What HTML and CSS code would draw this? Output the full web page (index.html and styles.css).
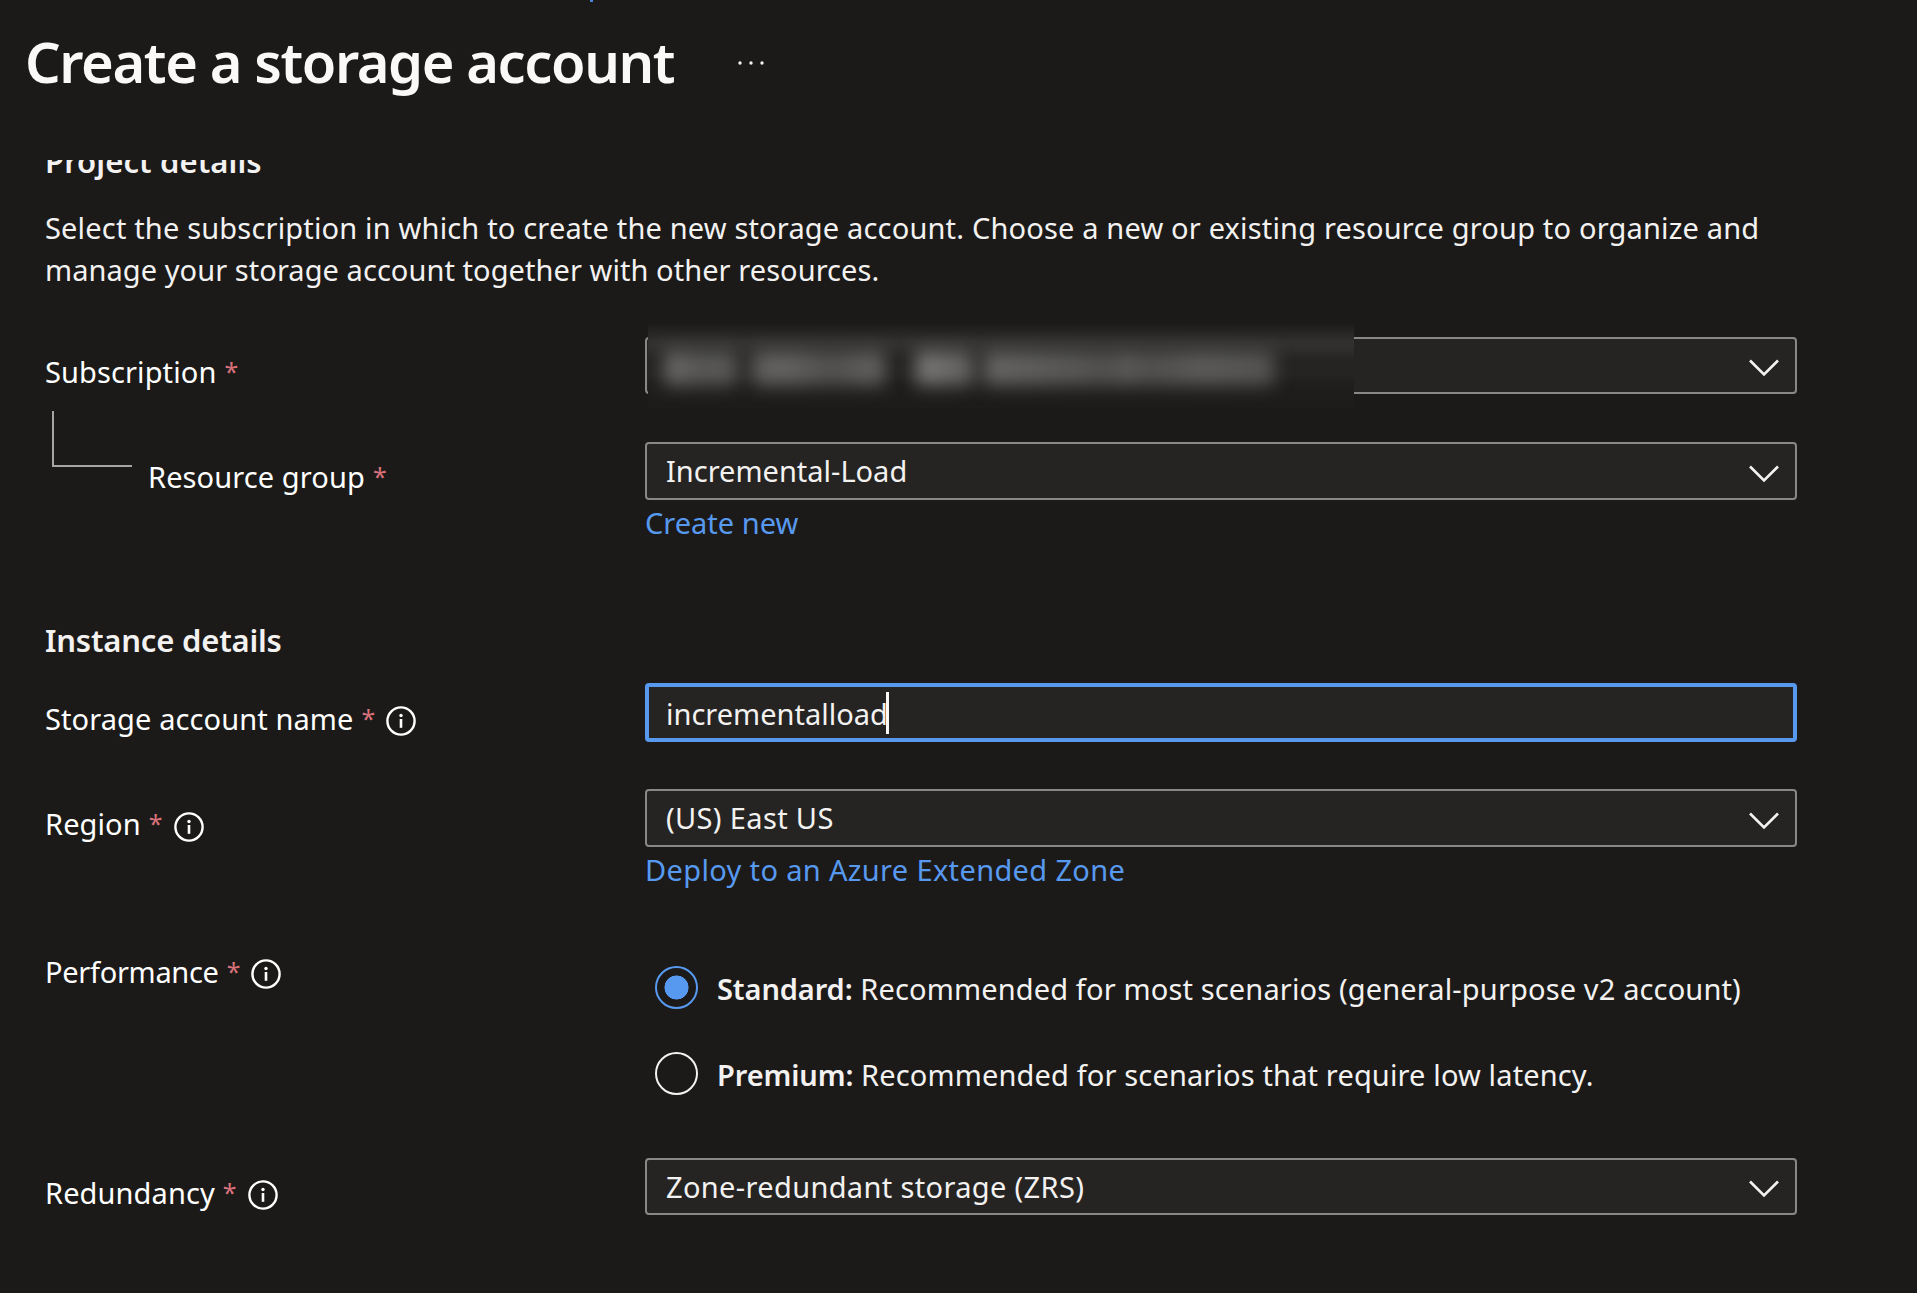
FILE: index.html
```html
<!DOCTYPE html>
<html lang="en">
<head>
<meta charset="utf-8">
<title>Create a storage account</title>
<link rel="stylesheet" href="styles.css">
</head>
<body>
<svg class="defs" aria-hidden="true">
  <symbol id="chevron" viewBox="0 0 32 20"><path d="M2 2.5 L16 16.5 L30 2.5" fill="none" stroke="currentColor" stroke-width="2.6"/></symbol>
  <symbol id="info" viewBox="0 0 30 30"><circle cx="15" cy="15" r="13.6" fill="none" stroke="currentColor" stroke-width="2.4"/><path d="M15 13V21.8" stroke="currentColor" stroke-width="2.6"/><circle cx="15" cy="9.5" r="1.7" fill="currentColor"/></symbol>
</svg>
<header class="header">
  <span class="crumb-tail"></span>
  <h1 class="title">Create a storage account</h1>
  <svg class="more" viewBox="0 0 28 6" aria-label="More"><circle cx="3" cy="3" r="1.7"/><circle cx="14" cy="3" r="1.7"/><circle cx="25" cy="3" r="1.7"/></svg>
</header>
<main class="form">
  <h2 class="section section-first">Project details</h2>
  <p class="description"><span class="line-first">Select the subscription in which to create the new storage account. Choose a new or existing resource group to organize and</span><br><span class="line-last">manage your storage account together with other resources.</span></p>

  <div class="row row-subscription">
    <label class="label"><span>Subscription</span><i class="required">*</i></label>
    <div class="control">
      <div class="select select-short"><svg class="chevron"><use href="#chevron"/></svg>
        <div class="redacted"><b class="r1"></b><b class="r2"></b><b class="r3"></b><b class="r4"></b></div>
      </div>
    </div>
  </div>
  <div class="row row-group">
    <label class="label label-child"><span>Resource group</span><i class="required">*</i></label>
    <div class="control">
      <div class="select"><span>Incremental-Load</span><svg class="chevron"><use href="#chevron"/></svg></div>
      <a class="link">Create new</a>
    </div>
  </div>

  <h2 class="section section-instance">Instance details</h2>
  <div class="row row-name">
    <label class="label"><span>Storage account name</span><i class="required">*</i><svg class="info"><use href="#info"/></svg></label>
    <div class="control"><div class="select input"><span>incrementalload</span><b class="caret"></b></div></div>
  </div>
  <div class="row row-region">
    <label class="label"><span>Region</span><i class="required">*</i><svg class="info"><use href="#info"/></svg></label>
    <div class="control">
      <div class="select"><span class="wide">(US) East US</span><svg class="chevron"><use href="#chevron"/></svg></div>
      <a class="link wide">Deploy to an Azure Extended Zone</a>
    </div>
  </div>
  <div class="row row-performance">
    <label class="label"><span>Performance</span><i class="required">*</i><svg class="info"><use href="#info"/></svg></label>
    <div class="control radios">
      <div class="radio checked"><b class="dot"></b><span><strong>Standard:</strong> Recommended for most scenarios (general-purpose v2 account)</span></div>
      <div class="radio"><b class="dot"></b><span><strong>Premium:</strong> Recommended for scenarios that require low latency.</span></div>
    </div>
  </div>
  <div class="row">
    <label class="label"><span>Redundancy</span><i class="required">*</i><svg class="info"><use href="#info"/></svg></label>
    <div class="control"><div class="select select-short"><span class="wide">Zone-redundant storage (ZRS)</span><svg class="chevron"><use href="#chevron"/></svg></div></div>
  </div>
</main>
</body>
</html>
```
FILE: styles.css
```css
* { box-sizing: border-box; }
body {
  margin: 0;
  width: 1917px;
  height: 1293px;
  overflow: hidden;
  background: #1b1a19;
  color: #f3f2f1;
  font: 29px/42px "Noto Sans", "Open Sans", sans-serif;
}
.defs { position: absolute; width: 0; height: 0; }
h1, h2, p { margin: 0; }
.header {
  position: relative;
  display: flex;
  align-items: flex-start;
  height: 160px;
  padding: 21px 0 0 25px;
}
.crumb-tail {
  position: absolute;
  left: 590px;
  top: 0;
  width: 3px;
  height: 2px;
  background: #4a84d6;
}
.title {
  width: 712px;
  font-size: 56px;
  line-height: 80px;
  font-weight: 600;
  letter-spacing: -1.4px;
  color: #faf9f8;
  white-space: nowrap;
}
.more { width: 28px; height: 6px; margin-top: 39px; fill: #f3f2f1; }
.form {
  height: 1133px;
  padding-left: 45px;
  overflow: hidden;
}
.section { font-size: 31px; line-height: 42px; font-weight: 600; }
.section-first { margin: -20px 0 25px; letter-spacing: 0.1px; }
.section-instance { margin-bottom: 22px; letter-spacing: -0.2px; }
.description { margin-bottom: 46px; white-space: nowrap; }
.line-first { letter-spacing: 0.17px; }
.line-last { letter-spacing: 0.06px; }
.row { display: grid; grid-template-columns: 600px 1152px; align-items: start; }
.row-subscription { height: 105px; }
.row-group { height: 177px; }
.row-name { height: 106px; }
.row-region { height: 161px; }
.row-performance { height: 208px; }
.label { display: flex; padding-top: 14px; color: #fff; white-space: nowrap; letter-spacing: 0.1px; }
.row-name .label { padding-top: 15px; }
.row-performance .label { padding-top: 1px; letter-spacing: -0.3px; }
.label-child { position: relative; padding-left: 103px; }
.label-child::before {
  content: "";
  position: absolute;
  left: 7px;
  top: -31px;
  width: 79px;
  height: 55px;
  border: solid #a6a5a3;
  border-width: 0 0 2px 2px;
}
.row-group .label-child::before { width: 78px; height: 54px; }
.required { margin: -1px 0 0 8px; font-style: normal; color: #d8717a; font-size: 25px; }
.info { width: 30px; height: 30px; margin: 8px 0 0 11px; }
.row-region .info { margin-top: 9px; }
.select {
  position: relative;
  display: flex;
  align-items: center;
  height: 58px;
  padding: 0 15px 0 19px;
  border: 2px solid #8a8886;
  border-radius: 4px;
  background: #252423;
  white-space: nowrap;
}
.select-short { height: 57px; }
.chevron { width: 32px; height: 20px; margin-left: auto; margin-top: 5px; }
.input { height: 59px; padding: 3px 0 0 17px; border: 4px solid #5899f0; }
.caret { width: 3px; height: 42px; margin: -2px 0 0 -2px; background: #faf9f8; }
.link { display: block; margin-top: 2px; color: #5899f0; white-space: nowrap; }
.wide { letter-spacing: 0.35px; }
.radios { display: flex; flex-direction: column; gap: 43px; padding: 16px 0 0 10px; }
.radio { display: flex; align-items: center; gap: 19px; height: 43px; white-space: nowrap; letter-spacing: 0.14px; }
.radio span { padding-top: 2px; }
.radio strong { font-weight: 600; letter-spacing: -0.1px; }
.dot { width: 43px; height: 43px; border: 2px solid #f3f2f1; border-radius: 50%; }
.checked .dot {
  border-color: #5899f0;
  background: radial-gradient(circle, #5899f0 11.7px, transparent 12.3px);
}
.redacted {
  position: absolute;
  left: 1px;
  top: -16px;
  width: 706px;
  height: 85px;
  overflow: hidden;
  background: linear-gradient(#1b1a19 0, #31302f 18px, #31302f 23px, #252423 38px, #252423 52px, #1f1e1d 62px, #1d1c1b 84px);
}
.redacted b { position: absolute; top: 28px; height: 34px; filter: blur(9px); }
.r1 { left: 17px; width: 72px; background: linear-gradient(90deg, #706f6e, #595857 40%, #595857); }
.r2 { left: 104px; width: 132px; background: linear-gradient(90deg, #5e5d5c, #646362 25%, #51504f 60%, #656463); }
.r3 { left: 268px; width: 58px; background: linear-gradient(90deg, #7c7b7a, #5e5d5c); }
.r4 { left: 336px; width: 290px; background: linear-gradient(90deg, #666564, #565554 35%, #504f4e 42%, #5c5b5a 50%, #504f4e 56%, #5c5b5a 75%, #545352); }
```
